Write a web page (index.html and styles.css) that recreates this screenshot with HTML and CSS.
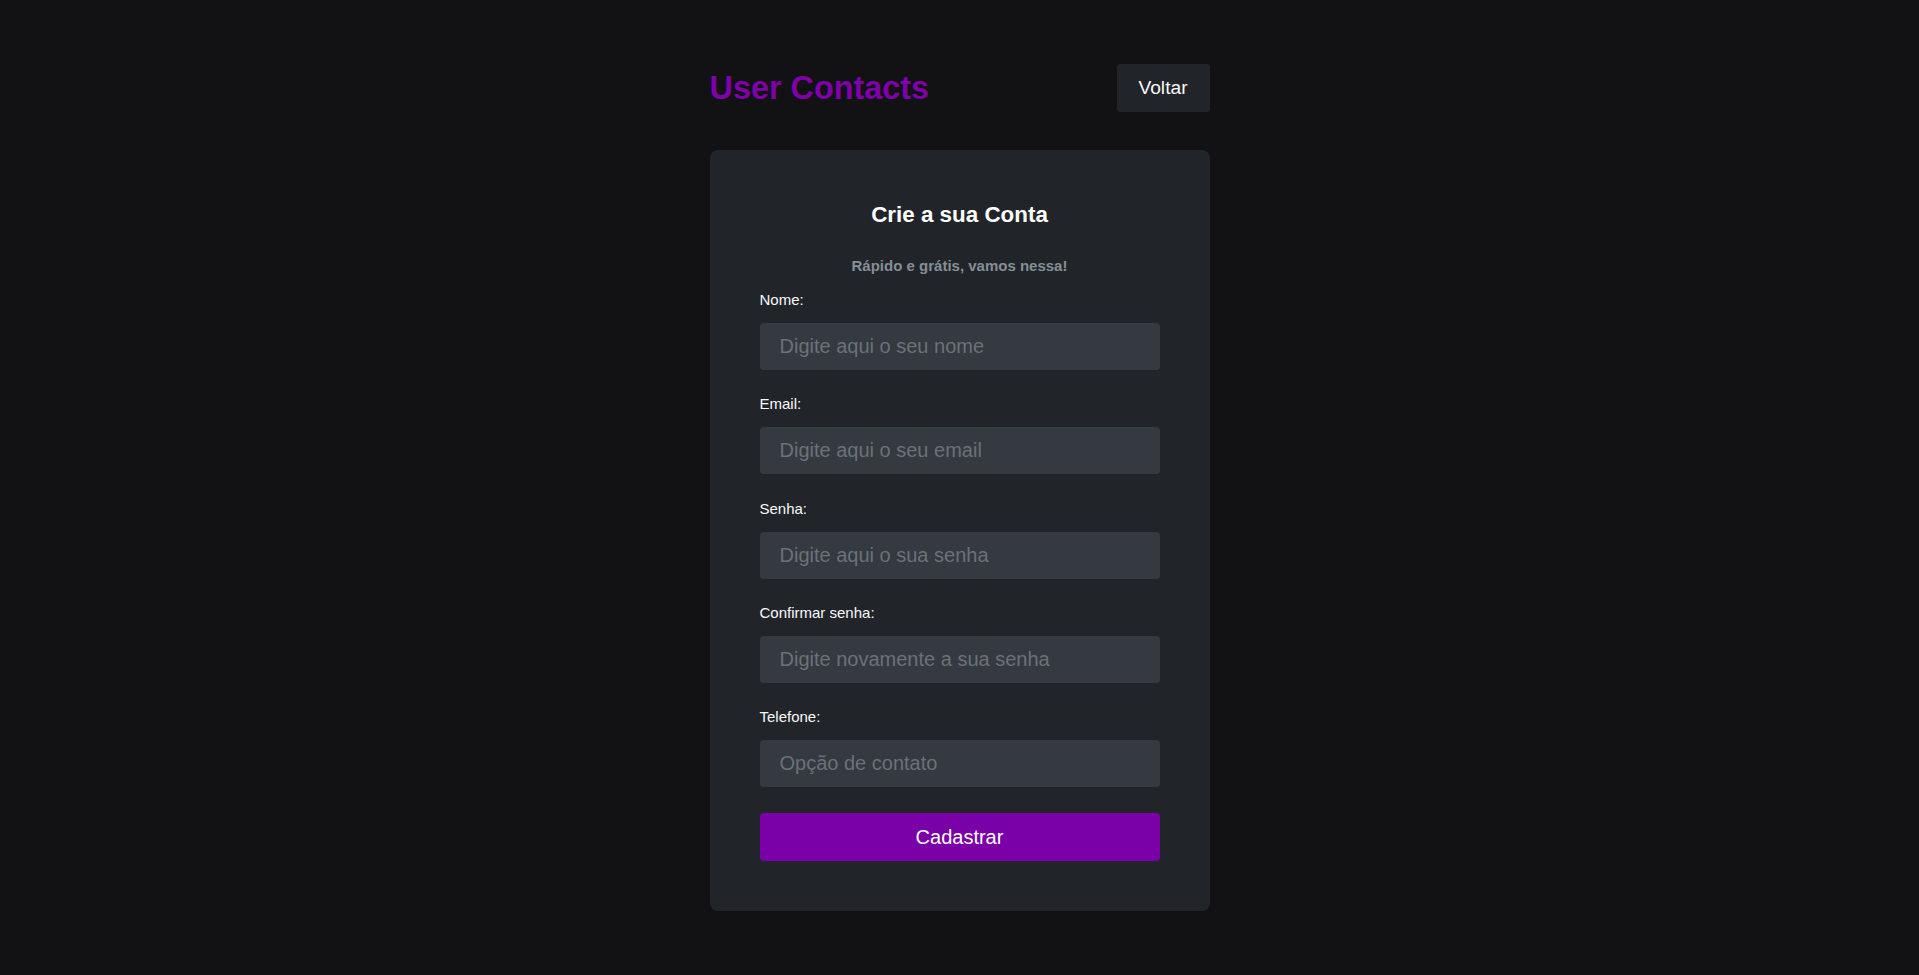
FILE: index.html
```html
<!DOCTYPE html>
<html lang="pt-BR">
<head>
<meta charset="utf-8">
<title>User Contacts</title>
<link rel="stylesheet" href="styles.css">
</head>
<body>
<main class="page">
  <header class="top">
    <h1 class="brand">User Contacts</h1>
    <button class="back" type="button">Voltar</button>
  </header>
  <section class="card">
    <h2 class="card-title">Crie a sua Conta</h2>
    <p class="card-sub">Rápido e grátis, vamos nessa!</p>
    <form class="form">
      <label class="label" for="nome">Nome:</label>
      <input class="input" id="nome" type="text" placeholder="Digite aqui o seu nome">
      <label class="label" for="email">Email:</label>
      <input class="input" id="email" type="email" placeholder="Digite aqui o seu email">
      <label class="label" for="senha">Senha:</label>
      <input class="input" id="senha" type="password" placeholder="Digite aqui o sua senha">
      <label class="label" for="confirmar">Confirmar senha:</label>
      <input class="input" id="confirmar" type="password" placeholder="Digite novamente a sua senha">
      <label class="label" for="telefone">Telefone:</label>
      <input class="input" id="telefone" type="text" placeholder="Opção de contato">
      <button class="submit" type="button">Cadastrar</button>
    </form>
  </section>
</main>
</body>
</html>
```

FILE: styles.css
```css
* { box-sizing: border-box; }

html, body {
  margin: 0;
  padding: 0;
  background: #121214;
  font-family: "Liberation Sans", Arial, sans-serif;
  color: #f8f9fa;
}

.page {
  width: 500px;
  margin: 0 auto;
  padding-top: 64px;
}

.top {
  display: flex;
  align-items: center;
  justify-content: space-between;
  height: 48px;
}

.brand {
  margin: 0;
  font-size: 32.4px;
  font-weight: 700;
  color: #7f00a9;
}

.back {
  width: 93px;
  height: 48px;
  border: none;
  border-radius: 4px;
  background: #212529;
  color: #f8f9fa;
  font-family: "Liberation Sans", Arial, sans-serif;
  font-size: 19.2px;
  padding: 0;
}

.card {
  margin-top: 38px;
  background: #212529;
  border-radius: 8px;
  padding: 50px;
}

.card-title {
  margin: 2px 0 0;
  text-align: center;
  font-size: 22.4px;
  font-weight: 700;
  color: #ffffff;
}

.card-sub {
  margin: 29px 0 0;
  text-align: center;
  font-size: 15px;
  font-weight: 700;
  color: #868e96;
}

.form {
  display: flex;
  flex-direction: column;
  margin-top: 17px;
}

.label {
  font-size: 15px;
  color: #f8f9fa;
  margin-bottom: 15px;
}

.input {
  height: 47px;
  border: none;
  border-radius: 4px;
  background: #343a40;
  color: #f8f9fa;
  font-family: "Liberation Sans", Arial, sans-serif;
  font-size: 20px;
  padding: 0 20px;
  margin-bottom: 25.3px;
  outline: none;
}

.input::placeholder {
  color: #6c7177;
}

.submit {
  height: 48px;
  margin-top: 1px;
  border: none;
  border-radius: 4px;
  background: #7a00a8;
  color: #ffffff;
  font-family: "Liberation Sans", Arial, sans-serif;
  font-size: 20px;
  padding: 0;
}
```
